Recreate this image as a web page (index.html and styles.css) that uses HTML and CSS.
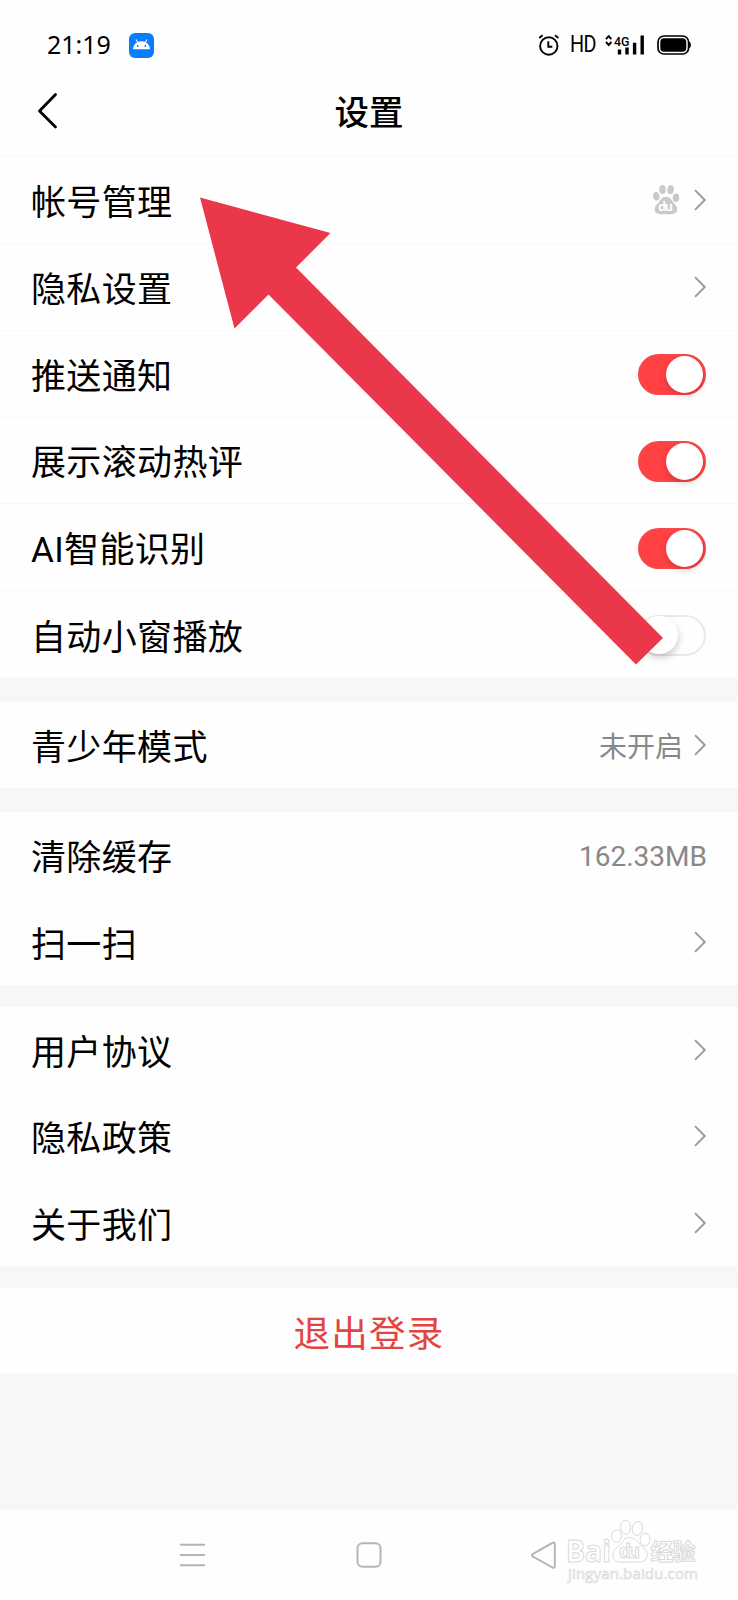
FILE: index.html
```
<!DOCTYPE html>
<html lang="zh-CN">
<head>
<meta charset="utf-8">
<title>设置</title>
<link rel="stylesheet" href="styles.css">
</head>
<body>
<svg class="defs" width="0" height="0">
  <symbol id="chevron" viewBox="0 0 14 24"><path d="M2 2.200 11.800 12 2 21.800" fill="none" stroke="#999" stroke-width="1.900"/></symbol>
</svg>
<div class="screen">
  <div class="statusbar">
    <span class="clock">21:19</span>
    <svg class="android" width="25" height="25" viewBox="0 0 25 25">
      <rect width="25" height="25" rx="6" fill="#0a7cff"/>
      <path d="M4 16.200a8.500 8 0 0 1 17 0z" fill="#fff"/>
      <path d="M7 6.500 9 10M18 6.500 16 10" stroke="#fff" stroke-width="1.100"/>
      <circle cx="8.700" cy="13" r=".9" fill="#0a7cff"/><circle cx="16.300" cy="13" r=".9" fill="#0a7cff"/>
    </svg>
    <svg class="alarm" width="22" height="22" viewBox="0 0 22 22" fill="none" stroke="#000" stroke-width="1.900">
      <circle cx="10.800" cy="12" r="8.700"/><path d="M10.300 7.200v5.500h4M1.200 4 4.600 1.200M17 1.200 20.400 4"/>
    </svg>
    <span class="hd">HD</span>
    <svg class="signal" width="40" height="22" viewBox="0 0 40 22">
      <path d="M1 5.200 3.700 2.200 6.400 5.200M1 8 3.700 11 6.400 8" fill="none" stroke="#000" stroke-width="2"/>
      <text class="net" x="9" y="11.500" textLength="15.500" lengthAdjust="spacingAndGlyphs">4G</text>
      <path d="M14.500 15.500v5M22 13.500v7M29.600 8.800v11.700M37.200 1.500v19" stroke="#000" stroke-width="3.400" stroke-linecap="butt"/>
    </svg>
    <svg class="battery" width="35" height="20" viewBox="0 0 35 20">
      <rect x="1" y="1" width="30.600" height="18" rx="6" fill="none" stroke="#000" stroke-width="1.700"/>
      <rect x="3.300" y="3.300" width="26" height="13.400" rx="3.800"/><path d="M32 6.500q2 .8 2 3.500t-2 3.500z"/>
    </svg>
  </div>
  <div class="titlebar">
    <svg class="back" width="22" height="38" viewBox="0 0 22 38"><path d="M18.500 2.500 2.500 19l16 16" fill="none" stroke="#000" stroke-width="2.800" stroke-linecap="round" stroke-linejoin="round"/></svg>
    <h1 class="title">设置</h1>
  </div>
  <div class="group general">
    <div class="row"><span class="label">帐号管理</span>
      <svg class="paw" width="28" height="31" viewBox="0 0 28 31" fill="#c9c9c9">
        <ellipse cx="4.300" cy="12.200" rx="3.200" ry="4.300" transform="rotate(-10 4.300 12.200)"/><ellipse cx="10.500" cy="5.400" rx="3.200" ry="4.500"/><ellipse cx="18.600" cy="5.600" rx="3.200" ry="4.500" transform="rotate(10 18.600 5.600)"/><ellipse cx="24" cy="13.800" rx="3.200" ry="4.200"/>
        <path d="M14 12.800c4 0 5.200 3.200 7.600 5.900 2.400 2.600 4 4.600 3.500 7.500-.7 4-4.500 4-11.100 4S3.500 30.200 2.700 26.200c-.6-2.900 1.300-4.900 3.700-7.500C8.900 16 10 12.800 14 12.800z"/>
        <text class="du" x="6" y="27.300" textLength="15">du</text>
      </svg>
      <svg class="chev"><use href="#chevron"/></svg></div>
    <div class="row"><span class="label">隐私设置</span><svg class="chev"><use href="#chevron"/></svg></div>
    <div class="row"><span class="label">推送通知</span><span class="switch on"></span></div>
    <div class="row"><span class="label">展示滚动热评</span><span class="switch on"></span></div>
    <div class="row"><span class="label">AI智能识别</span><span class="switch on"></span></div>
    <div class="row"><span class="label">自动小窗播放</span><span class="switch"></span></div>
  </div>
  <div class="group teen">
    <div class="row"><span class="label">青少年模式</span><span class="value state">未开启</span><svg class="chev"><use href="#chevron"/></svg></div>
  </div>
  <div class="group tools">
    <div class="row"><span class="label">清除缓存</span><span class="value">162.33MB</span></div>
    <div class="row"><span class="label">扫一扫</span><svg class="chev"><use href="#chevron"/></svg></div>
  </div>
  <div class="group about">
    <div class="row"><span class="label">用户协议</span><svg class="chev"><use href="#chevron"/></svg></div>
    <div class="row"><span class="label">隐私政策</span><svg class="chev"><use href="#chevron"/></svg></div>
    <div class="row"><span class="label">关于我们</span><svg class="chev"><use href="#chevron"/></svg></div>
  </div>
  <div class="logout">退出登录</div>
  <div class="navbar">
    <svg width="26" height="26" viewBox="0 0 26 26" fill="none" stroke="#b5b5b5" stroke-width="2"><path d="M0 2.700h25M0 13h25M0 23.300h25"/></svg>
    <svg width="26" height="26" viewBox="0 0 26 26" fill="none" stroke="#b5b5b5" stroke-width="2"><rect x="1.500" y="1.300" width="23" height="23.400" rx="5"/></svg>
    <svg width="26" height="28" viewBox="0 0 26 28" fill="none" stroke="#b5b5b5" stroke-width="2" stroke-linejoin="round"><path d="M21.500 1.900Q23.800.900 23.800 3.200v22q0 2.300-2.300 1.300L2 15.600q-2-1.300 0-2.700z"/></svg>
  </div>
  <svg class="arrow" width="738" height="700" viewBox="0 0 738 700"><path d="M200 197.500 330.500 233 296 267.500 663 638 636 664.500 268.500 294.500 234.500 328.500z" fill="#ea374a"/></svg>
  <svg class="watermark" width="140" height="70" viewBox="0 0 140 70" fill="#fff" stroke="#d9d9d9" stroke-width="1">
    <text class="wm-brand" x="0" y="42.500" textLength="45" lengthAdjust="spacingAndGlyphs">Bai</text>
    <ellipse cx="50.500" cy="17" rx="5" ry="6.200"/><ellipse cx="59.600" cy="8.300" rx="5" ry="7"/><ellipse cx="71.400" cy="9.500" rx="5" ry="7" transform="rotate(12 71.400 9.500)"/><ellipse cx="79" cy="20.500" rx="5" ry="6.200"/>
    <path d="M63.500 18.500c6 0 8 5 11.500 8 4 3.300 7 7 6 11-1.500 6.500-7 5.500-17.500 5.500s-15.500 1-16.500-5.500c-.6-4 2-7.500 6-11 3.500-3 5-8 10.500-8z"/>
    <text class="wm-du" x="53" y="39" textLength="21">du</text>
    <text class="wm-cn" x="84.500" y="41" textLength="45">经验</text>
    <text class="wm-url" x="2" y="60" textLength="130">jingyan.baidu.com</text>
  </svg>
</div>
</body>
</html>
```
FILE: styles.css
```
* { box-sizing: border-box; }
body { margin: 0; background: #f7f7f7; font-family: Roboto, "Noto Sans CJK SC", sans-serif; color: #000; }
.defs { position: absolute; }
.screen { position: relative; width: 738px; height: 1600px; display: flex; flex-direction: column; overflow: hidden; }
.statusbar { height: 78px; padding: 12px 46px 0 47px; display: flex; align-items: center; background: #fefefe; }
.clock { width: 82px; margin-top: -2px; font: 25px/30px "Noto Sans", sans-serif; }
.alarm { margin-left: auto; }
.hd { width: 26px; margin-left: 10px; font: 23px/26px Roboto, sans-serif; letter-spacing: -.8px; transform: scaleX(.86); transform-origin: left; white-space: nowrap; }
.signal { margin-left: 9px; overflow: visible; }
.net { font: 500 13.500px Roboto, sans-serif; }
.battery { margin-left: 12px; }
.titlebar { height: 79px; border-bottom: 1px solid #f7f7f7; display: grid; grid-template-columns: 120px 1fr 120px; align-items: start; background: #fefefe; }
.back { margin: 14px 0 0 37px; }
.title { margin: 10px 0 0; text-align: center; font-size: 34.500px; line-height: 50px; font-weight: 500; }
.group { display: grid; grid-auto-rows: 1fr; background: #fefefe; }
.row { min-height: 0; display: flex; align-items: center; padding: 0 31px; border-bottom: 1px solid #f7f7f7; }
.tools .row, .about .row { border-bottom-color: #fafafa; }
.row:last-child { border-bottom: 0; }
.label { flex: 1; font-size: 35px; line-height: 52px; letter-spacing: .35px; padding-top: 8px; }
.general { height: 521px; }
.teen { height: 86px; margin-top: 24px; }
.teen .label { padding-top: 7px; }
.tools { height: 173px; margin-top: 24px; }
.about { height: 259px; margin-top: 22px; }
.chev { width: 14px; height: 24px; margin-left: 13px; }
.value { font-size: 28px; line-height: 40px; color: #888; padding-top: 4px; }
.state { margin-right: -3px; padding-top: 5px; }
.paw { flex: none; }
.du { font: 700 13px "Open Sans", sans-serif; fill: #fefefe; }
.switch { position: relative; width: 68px; height: 41px; margin: 2px 1px 0 0; border-radius: 21px; border: 2px solid #e9e9e9; background: #fefefe; }
.switch::after { content: ""; position: absolute; top: -1px; left: 0; width: 38px; height: 38px; border-radius: 50%; background: #fff; box-shadow: 1px 4px 6px rgba(0, 0, 0, .18); }
.switch.on { background: #ff4144; border-color: #f6474a; }
.switch.on::after { left: 26px; top: 0; width: 37px; height: 37px; box-shadow: 0 3px 6px rgba(80, 0, 0, .2); }
.logout { height: 86px; margin-top: 22px; padding-top: 4px; background: #fefefe; color: #e4433f; text-align: center; font-size: 36.500px; line-height: 86px; letter-spacing: 1.200px; }
.navbar { height: 90px; margin-top: auto; padding: 0 181px 0 180px; display: flex; justify-content: space-between; align-items: center; background: #fefefe; }
.arrow { position: absolute; left: 0; top: 0; }
.watermark { position: absolute; left: 566px; top: 1519px; }
.wm-brand { font: 700 31px "Open Sans", sans-serif; }
.wm-du { font: 700 19px "Open Sans", sans-serif; }
.wm-cn { font: 700 23px "Noto Sans CJK SC", sans-serif; }
.wm-url { font: 15px "Open Sans", sans-serif; stroke-width: .7px; }
```
